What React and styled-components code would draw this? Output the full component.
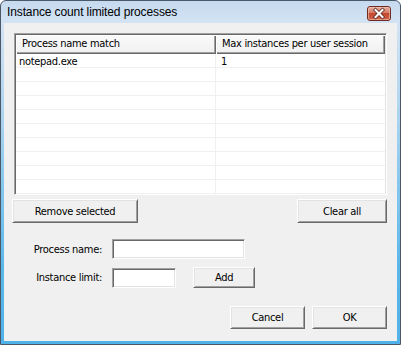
import React from "react";
import styled, { createGlobalStyle } from "styled-components";

const Global = createGlobalStyle`
  html, body { margin: 0; padding: 0; background: #ffffff; }
  * { box-sizing: border-box; }
`;

const UI_FONT = `"DejaVu Sans Condensed", "DejaVu Sans", "Liberation Sans", sans-serif`;

const Window = styled.div`
  width: 401px;
  height: 345px;
  display: flex;
  flex-direction: column;
  border: 1px solid #4b5868;
  border-radius: 6px 6px 0 0;
  padding: 0 3px 3px 3px;
  background: linear-gradient(to bottom, #c6daef 0px, #d3e3f3 22px, #a9d3ef 120px, #5cb8ea 260px, #4fb2e8 100%);
  overflow: hidden;
`;

const TitleBar = styled.div`
  height: 22px;
  flex: 0 0 22px;
  display: flex;
  align-items: center;
  justify-content: space-between;
  padding: 0 6px 0 3px;
`;

const Title = styled.span`
  font-family: "Liberation Sans", "Noto Sans", sans-serif;
  font-size: 12px;
  letter-spacing: -0.12px;
  color: #000;
  line-height: 16px;
`;

const CloseBtn = styled.div`
  width: 24px;
  height: 15px;
  margin-top: 2px;
  display: flex;
`;

const Client = styled.div`
  flex: 1;
  background: #f0f0f0;
  padding: 10px 10px 12px 8px;
  display: flex;
  flex-direction: column;
  font-family: ${UI_FONT};
  font-size: 11px;
  letter-spacing: -0.3px;
  color: #000;
`;

const ListView = styled.div`
  margin-left: 2px;
  height: 162px;
  flex: 0 0 162px;
  background: #fff;
  border-top: 1px solid #a0a0a0;
  border-left: 1px solid #a0a0a0;
  border-right: 1px solid #ffffff;
  border-bottom: 1px solid #ffffff;
  box-shadow: inset 1px 1px 0 #696969, inset -1px -1px 0 #e3e3e3;
  padding: 1px;
  overflow: hidden;
  display: flex;
  flex-direction: column;
`;

const Columns = styled.div`
  display: grid;
  grid-template-columns: 200px 1fr;
`;

const HeaderCell = styled.div`
  height: 19px;
  background: linear-gradient(to bottom, #fafafa, #f0f0f0);
  box-shadow: inset 1px 1px 0 #ffffff, inset -1px -1px 0 #696969, inset -2px -2px 0 #a0a0a0;
  padding: 0 6px;
  line-height: 18px;
  white-space: nowrap;
  overflow: hidden;
`;

const Cell = styled.div`
  height: 14px;
  line-height: 15px;
  border-bottom: 1px solid #f0f0f0;
  border-right: ${(p) => (p.$first ? "1px solid #f0f0f0" : "none")};
  padding: 0 ${(p) => (p.$first ? "3px" : "5px")};
  white-space: nowrap;
  overflow: hidden;
`;

const ButtonRow = styled.div`
  margin-top: 4px;
  display: flex;
  justify-content: space-between;
`;

const Button = styled.button`
  width: ${(p) => p.$w}px;
  height: ${(p) => p.$h}px;
  padding: 0;
  margin: 0;
  font-family: ${UI_FONT};
  font-size: 11px;
  letter-spacing: -0.3px;
  color: #000;
  background: #f0f0f0;
  border-top: 1px solid #ffffff;
  border-left: 1px solid #ffffff;
  border-right: 1px solid #696969;
  border-bottom: 1px solid #696969;
  box-shadow: inset 1px 1px 0 #e3e3e3, inset -1px -1px 0 #a0a0a0;
  outline: none;
  cursor: default;
`;

const Form = styled.div`
  margin-top: 16px;
  display: grid;
  grid-template-columns: 90px auto;
  column-gap: 10px;
  row-gap: 8px;
  align-items: center;
`;

const Label = styled.label`
  text-align: right;
  white-space: nowrap;
`;

const FieldLine = styled.div`
  display: flex;
  align-items: center;
  gap: 17px;
`;

const TextBox = styled.input`
  width: ${(p) => p.$w}px;
  height: ${(p) => p.$h}px;
  margin: 0;
  padding: 0 3px;
  font-family: ${UI_FONT};
  font-size: 11px;
  background: #fff;
  border-top: 1px solid #a0a0a0;
  border-left: 1px solid #a0a0a0;
  border-right: 1px solid #ffffff;
  border-bottom: 1px solid #ffffff;
  box-shadow: inset 1px 1px 0 #696969, inset -1px -1px 0 #e3e3e3;
  outline: none;
`;

const Footer = styled.div`
  margin-top: 18px;
  display: flex;
  justify-content: flex-end;
  gap: 7px;
`;

const rows = [
  ["notepad.exe", "1"],
  ["", ""], ["", ""], ["", ""], ["", ""], ["", ""],
  ["", ""], ["", ""], ["", ""], ["", ""], ["", ""],
];

function CloseIcon() {
  return (
    <svg width="24" height="15" viewBox="0 0 24 15">
      <defs>
        <linearGradient id="cg" x1="0" y1="0" x2="0" y2="1">
          <stop offset="0" stopColor="#e9b2a4" />
          <stop offset="0.45" stopColor="#d47a66" />
          <stop offset="0.5" stopColor="#c4482f" />
          <stop offset="1" stopColor="#d0654c" />
        </linearGradient>
      </defs>
      <rect x="0.5" y="0.5" width="23" height="14" rx="2.5" fill="url(#cg)" stroke="#6e2b20" />
      <rect x="1.5" y="1.5" width="21" height="12" rx="1.5" fill="none" stroke="#f3c9bd" strokeOpacity="0.6" />
      <path d="M8.5 4 L15.5 11 M15.5 4 L8.5 11" stroke="#5a2a22" strokeWidth="3.6" strokeLinecap="square" />
      <path d="M8.5 4 L15.5 11 M15.5 4 L8.5 11" stroke="#ffffff" strokeWidth="2" strokeLinecap="square" />
    </svg>
  );
}

export default function App() {
  return (
    <>
      <Global />
      <Window>
        <TitleBar>
          <Title>Instance count limited processes</Title>
          <CloseBtn>
            <CloseIcon />
          </CloseBtn>
        </TitleBar>
        <Client>
          <ListView>
            <Columns>
              <HeaderCell>Process name match</HeaderCell>
              <HeaderCell>Max instances per user session</HeaderCell>
              {rows.map((r, i) => (
                <React.Fragment key={i}>
                  <Cell $first>{r[0]}</Cell>
                  <Cell>{r[1]}</Cell>
                </React.Fragment>
              ))}
            </Columns>
          </ListView>
          <ButtonRow>
            <Button $w={126} $h={24}>Remove selected</Button>
            <Button $w={90} $h={24}>Clear all</Button>
          </ButtonRow>
          <Form>
            <Label>Process name:</Label>
            <TextBox $w={133} $h={20} />
            <Label>Instance limit:</Label>
            <FieldLine>
              <TextBox $w={64} $h={20} />
              <Button $w={62} $h={21}>Add</Button>
            </FieldLine>
          </Form>
          <Footer>
            <Button $w={75} $h={23}>Cancel</Button>
            <Button $w={75} $h={23}>OK</Button>
          </Footer>
        </Client>
      </Window>
    </>
  );
}
